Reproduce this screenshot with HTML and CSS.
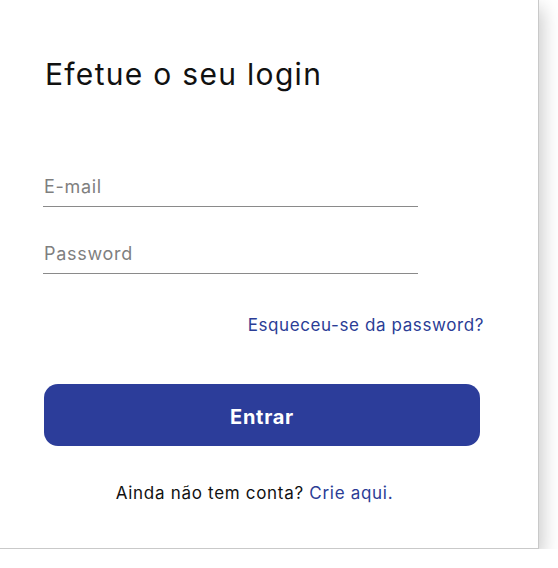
FILE: index.html
```html
<!DOCTYPE html>
<html lang="pt">

<head>
  <meta charset="UTF-8" />
  <meta name="viewport" content="width=device-width, initial-scale=1.0" />
  <title>Login</title>
  <link rel="stylesheet" href="styles.css">
</head>

<body>
  <div class="login-card">
    <h1 class="title">Efetue o seu login</h1>
    <form class="login-form">
      <div class="field">
        <input type="email" placeholder="E-mail" />
      </div>
      <div class="field">
        <input type="password" placeholder="Password" />
      </div>
      <div class="forgot">
        <a href="#">Esqueceu-se da password?</a>
      </div>
      <button type="button" class="theme-btn">Entrar</button>
      <p class="signup">Ainda não tem conta? <a href="#">Crie aqui.</a></p>
    </form>
  </div>
</body>

</html>
```

FILE: styles.css
```css
* {
  margin: 0;
  padding: 0;
  box-sizing: border-box;
}

body {
  background: #fff;
  font-family: "Inter", "Liberation Sans", sans-serif;
  color: #111;
}

.login-card {
  width: 540px;
  height: 550px;
  margin: -1px 0 0 -1px;
  padding: 0 0 0 45px;
  background: #fff;
  border: 1px solid #c9c9c9;
  box-shadow: 3px 9px 18px rgba(0, 0, 0, 0.22);
}

.title {
  padding-top: 56px;
  font-size: 30px;
  font-weight: 400;
  line-height: 36px;
  letter-spacing: 1.3px;
}

.login-form {
  display: flex;
  flex-direction: column;
  width: 435px;
  padding-top: 74px;
}

.field {
  width: 375px;
  margin-left: -2px;
  margin-bottom: 26px;
  border-bottom: 1px solid #8a8a8a;
}

.field input {
  width: 100%;
  height: 40px;
  border: none;
  outline: none;
  font-family: inherit;
  font-size: 18px;
  letter-spacing: 0.7px;
  color: #333;
  padding-left: 1px;
}

.field input::placeholder {
  color: #7f7f7f;
}

.forgot {
  text-align: right;
  margin: 14px -4px 0 0;
  line-height: 22px;
}

.forgot a,
.signup a {
  color: #2b3d96;
  text-decoration: none;
}

.forgot a {
  font-size: 17px;
  letter-spacing: 0.6px;
}

.theme-btn {
  height: 62px;
  margin-top: 48px;
  margin-left: -1px;
  padding-top: 3px;
  border: none;
  border-radius: 14px;
  background: #2c3d9a;
  color: #fff;
  font-family: inherit;
  font-size: 20px;
  font-weight: 700;
  letter-spacing: 0.7px;
  cursor: pointer;
}

.signup {
  margin-top: 36px;
  text-align: center;
  font-size: 17px;
  letter-spacing: 0.7px;
  line-height: 22px;
  margin-left: -16px;
}
```
